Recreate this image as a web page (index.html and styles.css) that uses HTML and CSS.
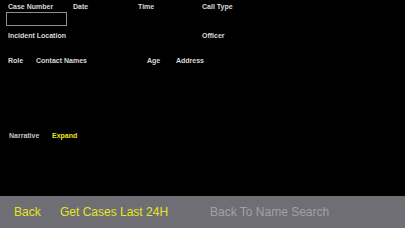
FILE: index.html
```html
<!DOCTYPE html>
<html>
<head>
<meta charset="utf-8">
<link rel="stylesheet" href="styles.css">
</head>
<body>
<div class="screen">
  <div class="form">
    <div class="row row-top">
      <div class="field field-case">
        <span class="label">Case Number</span>
        <div class="input"></div>
      </div>
      <span class="label col-date">Date</span>
      <span class="label col-time">Time</span>
      <span class="label col-type">Call Type</span>
    </div>
    <div class="row row-location">
      <span class="label col-location">Incident Location</span>
      <span class="label">Officer</span>
    </div>
    <div class="row row-contacts">
      <span class="label col-role">Role</span>
      <span class="label col-names">Contact Names</span>
      <span class="label col-age">Age</span>
      <span class="label">Address</span>
    </div>
    <div class="row row-narrative">
      <span class="label label-dim col-narr">Narrative</span>
      <span class="label label-link">Expand</span>
    </div>
  </div>
  <div class="toolbar">
    <span class="btn btn-back">Back</span>
    <span class="btn btn-cases">Get Cases Last 24H</span>
    <span class="btn btn-disabled">Back To Name Search</span>
  </div>
</div>
</body>
</html>
```
FILE: styles.css
```css
html, body {
  margin: 0;
  padding: 0;
  background: #000;
}
.screen {
  width: 405px;
  height: 228px;
  display: flex;
  flex-direction: column;
  font-family: "Liberation Sans", Arial, sans-serif;
}
.form {
  flex: 1;
  padding: 3px 0 0 8px;
  display: flex;
  flex-direction: column;
  opacity: 0.999;
}
.row {
  display: flex;
  align-items: flex-start;
}
.label {
  font-size: 7px;
  line-height: 8px;
  font-weight: bold;
  color: #dadada;
  white-space: nowrap;
}
.label-dim {
  color: #c4c4c4;
}
.label-link {
  color: #e6e617;
}
.field-case {
  width: 65px;
  display: flex;
  flex-direction: column;
}
.input {
  margin: 1px 0 0 -2px;
  width: 59px;
  height: 12px;
  border: 1px solid #8e8e8e;
}
.col-date { width: 65px; }
.col-time { width: 64px; }
.row-location {
  margin-top: 6px;
}
.col-location { width: 194px; }
.row-contacts {
  margin-top: 17px;
}
.col-role { width: 28px; }
.col-names { width: 111px; }
.col-age { width: 29px; }
.row-narrative {
  margin-top: 67px;
  padding-left: 1px;
}
.col-narr { width: 43px; }
.toolbar {
  height: 32px;
  background: #6e6e74;
  display: flex;
  align-items: center;
  padding-left: 14px;
  opacity: 0.999;
}
.btn {
  font-size: 12px;
  line-height: 14px;
  color: #e6e61c;
  white-space: nowrap;
}
.btn-back { width: 46px; }
.btn-cases { width: 150px; }
.btn-disabled { color: #a2a2a6; }
```
